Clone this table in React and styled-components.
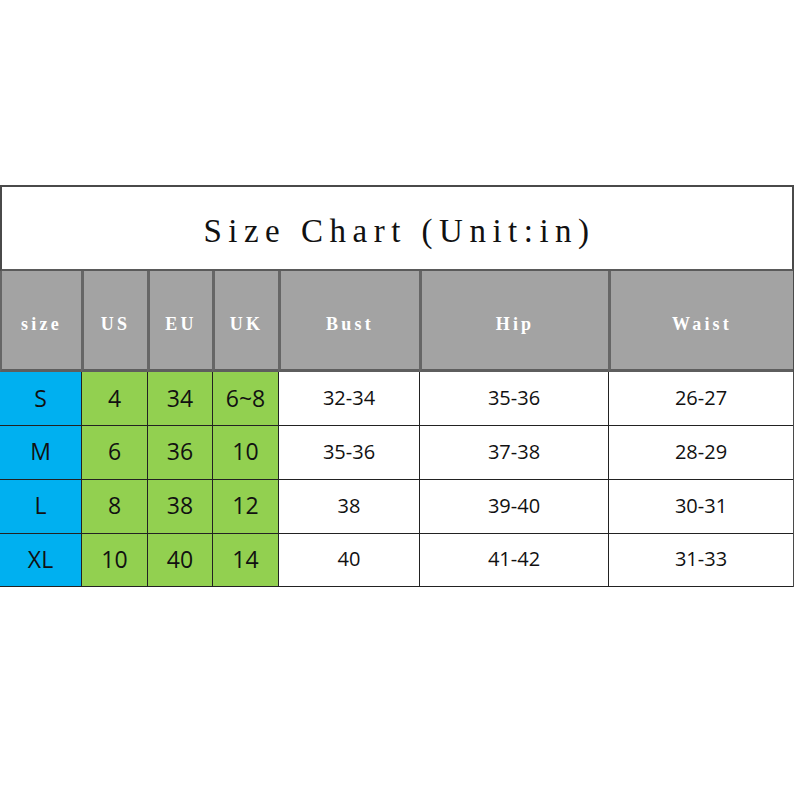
import React from "react";
import styled, { createGlobalStyle } from "styled-components";

const GlobalStyle = createGlobalStyle`
  html, body {
    margin: 0;
    padding: 0;
    background: #ffffff;
  }
  * {
    box-sizing: border-box;
  }
`;

const Page = styled.div`
  width: 800px;
  height: 800px;
  padding-top: 185px;
  background: #ffffff;
`;

const Chart = styled.div`
  display: grid;
  grid-template-columns: 81px 66px 65px 66px 141px 189px 185px;
  grid-template-rows: 84px 101px 54px 53.5px 54px 53.5px;
  width: 794px;
  border-top: 2px solid #4a4a4a;
  border-right: 2px solid #4a4a4a;
`;

const Title = styled.div`
  grid-column: 1 / -1;
  display: flex;
  align-items: center;
  justify-content: center;
  border-left: 2px solid #4a4a4a;
  border-bottom: 2px solid #5a5a5a;
  font-family: "Liberation Serif", "DejaVu Serif", serif;
  font-size: 33px;
  letter-spacing: 6.5px;
  color: #111;
  padding-top: 6px;
  padding-left: 4px;
`;

const Head = styled.div`
  display: flex;
  align-items: center;
  justify-content: center;
  background: #a3a3a3;
  border-left: ${(p) => (p.$first ? "2px" : "3px")} solid #666;
  border-bottom: 3px solid #5e5e5e;
  color: #ffffff;
  font-family: "Liberation Serif", "DejaVu Serif", serif;
  font-weight: bold;
  font-size: 18px;
  letter-spacing: 3.2px;
  padding-top: 8px;
`;

const fills = {
  size: "#00b0f0",
  intl: "#92d050",
  plain: "#ffffff",
};

const Cell = styled.div`
  display: flex;
  align-items: center;
  justify-content: center;
  background: ${(p) => fills[p.$kind]};
  border-left: ${(p) => (p.$kind === "size" ? "0" : "1.5px solid #222")};
  border-bottom: 1.5px solid #222;
  font-family: "Open Sans", "Noto Sans", sans-serif;
  font-size: ${(p) => (p.$kind === "plain" ? "20px" : "23px")};
  color: #111;
  padding-bottom: 2px;
`;

const headers = ["size", "US", "EU", "UK", "Bust", "Hip", "Waist"];

const rows = [
  ["S", "4", "34", "6~8", "32-34", "35-36", "26-27"],
  ["M", "6", "36", "10", "35-36", "37-38", "28-29"],
  ["L", "8", "38", "12", "38", "39-40", "30-31"],
  ["XL", "10", "40", "14", "40", "41-42", "31-33"],
];

const kindOf = (i) => (i === 0 ? "size" : i < 4 ? "intl" : "plain");

export default function App() {
  return (
    <Page>
      <GlobalStyle />
      <Chart>
        <Title>Size Chart (Unit:in)</Title>
        {headers.map((h, i) => (
          <Head key={h} $first={i === 0}>
            {h}
          </Head>
        ))}
        {rows.map((row) =>
          row.map((v, i) => (
            <Cell key={row[0] + i} $kind={kindOf(i)}>
              {v}
            </Cell>
          ))
        )}
      </Chart>
    </Page>
  );
}
